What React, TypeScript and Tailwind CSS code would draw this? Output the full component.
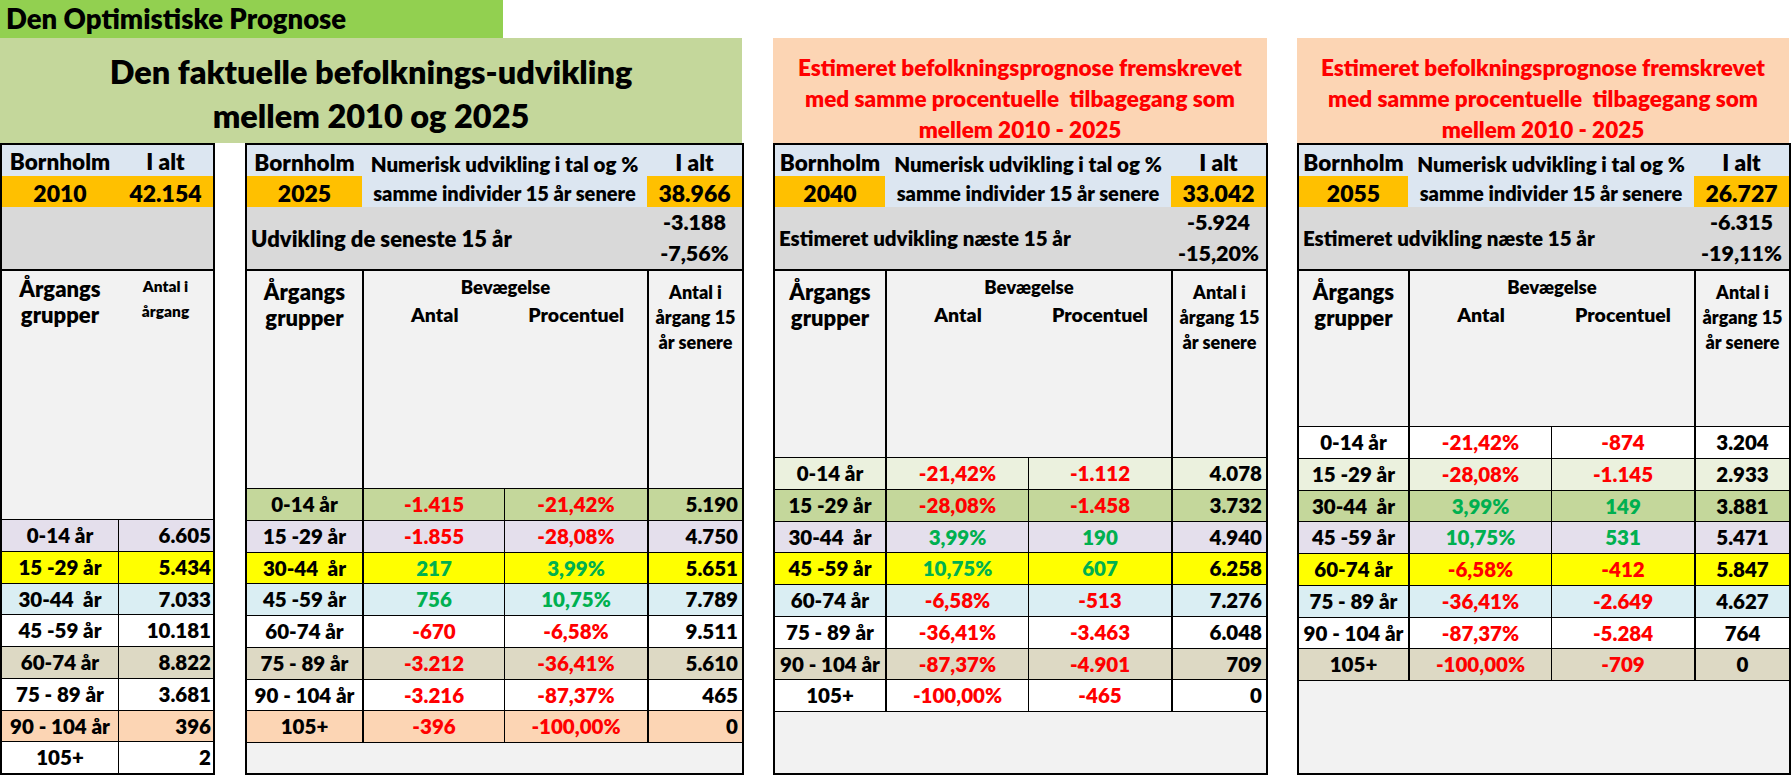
import type { ReactNode } from "react";

type Row = { label: string; bg: string; a?: string; b?: string; total: string };

const BG: Record<string, string> = {
  lav: "bg-[#e4dfec]",
  yel: "bg-[#ffff00]",
  blu: "bg-[#daeef3]",
  wht: "bg-white",
  tan: "bg-[#ddd9c4]",
  pch: "bg-[#fcd5b4]",
  pgr: "bg-[#ebf1de]",
  grn: "bg-[#c4d79b]",
};

const tone = (v: string) => (v.startsWith("-") ? "text-[#ff0000]" : "text-[#00b050]");

const t1Rows: Row[] = [
  { label: "0-14 år", bg: "lav", total: "6.605" },
  { label: "15 -29 år", bg: "yel", total: "5.434" },
  { label: "30-44  år", bg: "blu", total: "7.033" },
  { label: "45 -59 år", bg: "wht", total: "10.181" },
  { label: "60-74 år", bg: "tan", total: "8.822" },
  { label: "75 - 89 år", bg: "wht", total: "3.681" },
  { label: "90 - 104 år", bg: "pch", total: "396" },
  { label: "105+", bg: "wht", total: "2" },
];

const t2Rows: Row[] = [
  { label: "0-14 år", bg: "grn", a: "-1.415", b: "-21,42%", total: "5.190" },
  { label: "15 -29 år", bg: "lav", a: "-1.855", b: "-28,08%", total: "4.750" },
  { label: "30-44  år", bg: "yel", a: "217", b: "3,99%", total: "5.651" },
  { label: "45 -59 år", bg: "blu", a: "756", b: "10,75%", total: "7.789" },
  { label: "60-74 år", bg: "wht", a: "-670", b: "-6,58%", total: "9.511" },
  { label: "75 - 89 år", bg: "tan", a: "-3.212", b: "-36,41%", total: "5.610" },
  { label: "90 - 104 år", bg: "wht", a: "-3.216", b: "-87,37%", total: "465" },
  { label: "105+", bg: "pch", a: "-396", b: "-100,00%", total: "0" },
];

const t3Rows: Row[] = [
  { label: "0-14 år", bg: "pgr", a: "-21,42%", b: "-1.112", total: "4.078" },
  { label: "15 -29 år", bg: "grn", a: "-28,08%", b: "-1.458", total: "3.732" },
  { label: "30-44  år", bg: "lav", a: "3,99%", b: "190", total: "4.940" },
  { label: "45 -59 år", bg: "yel", a: "10,75%", b: "607", total: "6.258" },
  { label: "60-74 år", bg: "blu", a: "-6,58%", b: "-513", total: "7.276" },
  { label: "75 - 89 år", bg: "wht", a: "-36,41%", b: "-3.463", total: "6.048" },
  { label: "90 - 104 år", bg: "tan", a: "-87,37%", b: "-4.901", total: "709" },
  { label: "105+", bg: "wht", a: "-100,00%", b: "-465", total: "0" },
];

const t4Rows: Row[] = [
  { label: "0-14 år", bg: "wht", a: "-21,42%", b: "-874", total: "3.204" },
  { label: "15 -29 år", bg: "pgr", a: "-28,08%", b: "-1.145", total: "2.933" },
  { label: "30-44  år", bg: "grn", a: "3,99%", b: "149", total: "3.881" },
  { label: "45 -59 år", bg: "lav", a: "10,75%", b: "531", total: "5.471" },
  { label: "60-74 år", bg: "yel", a: "-6,58%", b: "-412", total: "5.847" },
  { label: "75 - 89 år", bg: "blu", a: "-36,41%", b: "-2.649", total: "4.627" },
  { label: "90 - 104 år", bg: "wht", a: "-87,37%", b: "-5.284", total: "764" },
  { label: "105+", bg: "tan", a: "-100,00%", b: "-709", total: "0" },
];

const cell = "flex items-center h-full whitespace-pre";

function FirstTable() {
  return (
    <div className="w-[215px] h-[632px] border-2 border-black flex flex-col">
      <div className="grid grid-cols-[116px_95px] h-[31px] bg-[#dce6f1] text-[22.5px]">
        <div className={`${cell} justify-center`}>Bornholm</div>
        <div className={`${cell} justify-center`}>I alt</div>
      </div>
      <div className="grid grid-cols-[116px_95px] h-[31px] bg-[#ffc000] text-[23px]">
        <div className={`${cell} justify-center`}>2010</div>
        <div className={`${cell} justify-center`}>42.154</div>
      </div>
      <div className="h-[62px] bg-[#d9d9d9]" />
      <div className="grid grid-cols-[116px_95px] h-[250px] bg-[#f2f2f2] border-t-2 border-black">
        <div className="text-center pt-[5px] text-[22px] leading-[26px]">
          Årgangs
          <br />
          grupper
        </div>
        <div className="text-center pt-[3px] text-[15.5px] leading-[25px]">
          Antal i
          <br />
          årgang
        </div>
      </div>
      {t1Rows.map((r) => (
        <div key={r.label} className={`grid grid-cols-[116px_95px] h-[31.75px] border-t border-black text-[20.5px] ${BG[r.bg]}`}>
          <div className={`${cell} justify-center`}>{r.label}</div>
          <div className={`${cell} justify-end pr-[2px] border-l border-black`}>{r.total}</div>
        </div>
      ))}
    </div>
  );
}

type TableProps = {
  cols: string;
  headerH: string;
  year: string;
  total: string;
  label: string;
  labelSize: string;
  diff: string;
  pct: string;
  rows: Row[];
  centerTotal?: boolean;
  width: string;
};

function Table({ cols, headerH, year, total, label, labelSize, diff, pct, rows, centerTotal, width }: TableProps) {
  return (
    <div className={`${width} h-[632px] border-2 border-black flex flex-col`}>
      <div className={`grid ${cols} h-[31px] bg-[#dce6f1]`}>
        <div className={`${cell} justify-center text-[22.5px]`}>Bornholm</div>
        <div className={`${cell} col-span-2 justify-center text-[20.5px] pt-[4px]`}>Numerisk udvikling i tal og %</div>
        <div className={`${cell} justify-center text-[22.5px]`}>I alt</div>
      </div>
      <div className={`grid ${cols} h-[31px] bg-[#dce6f1]`}>
        <div className={`${cell} justify-center text-[23px] bg-[#ffc000]`}>{year}</div>
        <div className={`${cell} col-span-2 justify-center text-[20px] whitespace-nowrap`}>samme individer 15 år senere</div>
        <div className={`${cell} justify-center text-[23px] bg-[#ffc000]`}>{total}</div>
      </div>
      <div className={`grid ${cols} h-[62px] bg-[#d9d9d9]`}>
        <div className={`${cell} col-span-3 pl-[4px] ${labelSize}`}>{label}</div>
        <div className="flex flex-col text-[21.5px]">
          <div className="h-[31px] flex items-center justify-center">{diff}</div>
          <div className="h-[31px] flex items-center justify-center">{pct}</div>
        </div>
      </div>
      <div className={`grid ${cols} ${headerH} bg-[#f2f2f2] border-t-2 border-black`}>
        <div className="text-center pt-[8px] text-[22px] leading-[26px]">
          Årgangs
          <br />
          grupper
        </div>
        <div className="col-span-2 border-l-2 border-black pt-[3px]">
          <div className="text-center text-[18.5px] leading-[26px]">Bevægelse</div>
          <div className="grid grid-cols-2 text-center text-[19.5px] leading-[30px]">
            <div>Antal</div>
            <div>Procentuel</div>
          </div>
        </div>
        <div className="border-l-2 border-black text-center pt-[9px] text-[18px] leading-[25px]">
          Antal i
          <br />
          årgang 15
          <br />
          år senere
        </div>
      </div>
      {rows.map((r) => (
        <div key={r.label} className={`grid ${cols} h-[31.75px] shrink-0 border-t border-black text-[20.5px] ${BG[r.bg]}`}>
          <div className={`${cell} justify-center`}>{r.label}</div>
          <div className={`${cell} justify-center border-l-2 border-black ${tone(r.a!)}`}>{r.a}</div>
          <div className={`${cell} justify-center border-l border-black ${tone(r.b!)}`}>{r.b}</div>
          <div className={`${cell} border-l-2 border-black ${centerTotal ? "justify-center" : "justify-end pr-[4px]"}`}>{r.total}</div>
        </div>
      ))}
      <div className="flex-1 bg-[#f2f2f2] border-t border-black" />
    </div>
  );
}

function OrangeHead({ width }: { width: string }): ReactNode {
  return (
    <div className={`${width} h-[105px] bg-[#fcd5b4] text-[#ff0000] text-[22.5px] leading-[31px] text-center pt-[14px] whitespace-pre`}>
      Estimeret befolkningsprognose fremskrevet
      <br />
      {"med samme procentuelle  tilbagegang som"}
      <br />
      mellem 2010 - 2025
    </div>
  );
}

export default function App() {
  return (
    <div className="w-[1791px] h-[775px] bg-white overflow-hidden font-['Lato',sans-serif] font-extrabold text-black whitespace-pre">
      <div className="h-[38px] w-[503px] bg-[#92d050] flex items-center pl-[6px] text-[27.5px]">Den Optimistiske Prognose</div>
      <div className="flex">
        <div className="w-[744px]">
          <div className="w-[742px] h-[105px] bg-[#c4d79b] text-[32.5px] leading-[44px] text-center pt-[12px]">
            Den faktuelle befolknings-udvikling
            <br />
            mellem 2010 og 2025
          </div>
          <div className="flex gap-[30px]">
            <FirstTable />
            <Table
              width="w-[499px]"
              cols="grid-cols-[115px_142px_143px_95px]"
              headerH="h-[219px]"
              year="2025"
              total="38.966"
              label="Udvikling de seneste 15 år"
              labelSize="text-[22px]"
              diff="-3.188"
              pct="-7,56%"
              rows={t2Rows}
            />
          </div>
        </div>
        <div className="ml-[29px] w-[495px]">
          <OrangeHead width="w-[494px]" />
          <Table
            width="w-[495px]"
            cols="grid-cols-[110px_143px_143px_95px]"
            headerH="h-[188px]"
            year="2040"
            total="33.042"
            label="Estimeret udvikling næste 15 år"
            labelSize="text-[20.5px]"
            diff="-5.924"
            pct="-15,20%"
            rows={t3Rows}
          />
        </div>
        <div className="ml-[29px] w-[494px]">
          <OrangeHead width="w-[492px]" />
          <Table
            width="w-[494px]"
            cols="grid-cols-[109px_143px_143px_95px]"
            headerH="h-[157px]"
            year="2055"
            total="26.727"
            label="Estimeret udvikling næste 15 år"
            labelSize="text-[20.5px]"
            diff="-6.315"
            pct="-19,11%"
            rows={t4Rows}
            centerTotal
          />
        </div>
      </div>
    </div>
  );
}
